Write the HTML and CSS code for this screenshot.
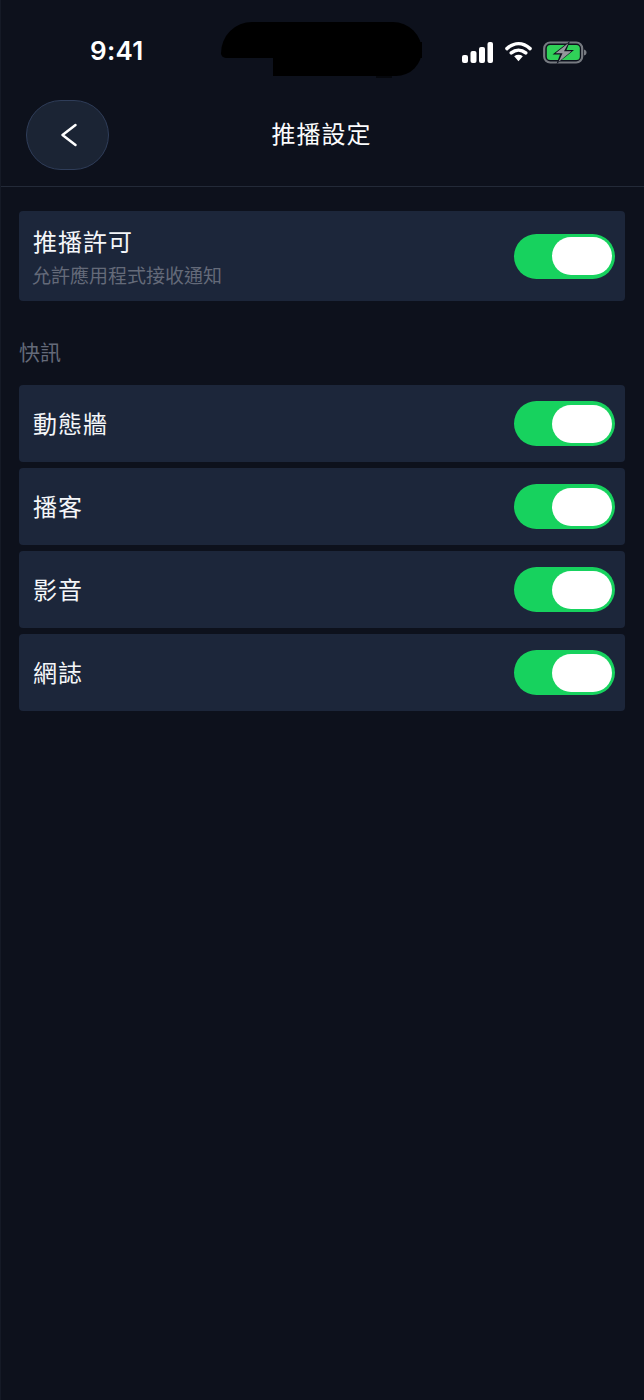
FILE: index.html
```html
<!DOCTYPE html>
<html lang="zh-Hant">
<head>
<meta charset="utf-8">
<title>推播設定</title>
<link rel="stylesheet" href="styles.css">
</head>
<body>
<div class="phone">
  <div class="status">
    <span class="time">9:41</span>
    <div class="status-icons">
      <svg class="signal" width="31" height="21" viewBox="0 0 31 21"><rect x="0" y="13" width="6" height="8" rx="2"/><rect x="8.500" y="9" width="6" height="12" rx="2"/><rect x="17" y="5" width="6" height="16" rx="2"/><rect x="25.500" y="0" width="5.500" height="21" rx="2"/></svg>
      <svg class="wifi" width="27" height="21" viewBox="0 0 28 21"><path d="M2 7.500C9.500 .8 18.500 .8 26 7.500M6.500 12C11 8.300 17 8.300 21.500 12" fill="none" stroke="#fff" stroke-width="3.600" stroke-linecap="round"/><path d="M9.500 15.300C12.300 13.300 15.700 13.300 18.500 15.300L14 20.500Z" fill="#fff"/></svg>
      <svg class="battery" width="44" height="23" viewBox="0 0 44 23"><rect x="1.200" y="1.500" width="38" height="20" rx="6" fill="none" stroke="#767a80" stroke-width="2.200"/><rect x="3.800" y="4" width="33" height="15" rx="3.500" fill="#30d158"/><path d="M41 8.500c1.800.5 2.500 1.500 2.500 3s-.7 2.500-2.500 3z" fill="#767a80"/><path d="M27 0 9.500 13.500H17L13.500 23 31 9H23.500Z" fill="#0d111c"/><path d="M25.500 2 12.500 12.200H19.500L15.500 21 28.500 10.200H21Z" fill="#94979c"/></svg>
    </div>
    <div class="notch"><div class="notch-top"></div><div class="notch-bottom"></div><div class="notch-tick"></div></div>
  </div>

  <header class="nav">
    <button class="back" aria-label="返回">
      <svg width="18" height="24" viewBox="0 0 18 24"><path d="M15.500 2 2.500 12l13 10" fill="none" stroke="#fff" stroke-width="2.500" stroke-linecap="round" stroke-linejoin="round"/></svg>
    </button>
    <h1 class="nav-title">推播設定</h1>
  </header>

  <main class="content">
    <section class="row row-tall">
      <div class="row-text">
        <div class="row-title">推播許可</div>
        <div class="row-sub">允許應用程式接收通知</div>
      </div>
      <div class="toggle"><span class="knob"></span></div>
    </section>

    <div class="section-label">快訊</div>

    <div class="list">
      <section class="row"><div class="row-title row-title-solo">動態牆</div><div class="toggle"><span class="knob"></span></div></section>
      <section class="row"><div class="row-title row-title-solo">播客</div><div class="toggle"><span class="knob"></span></div></section>
      <section class="row"><div class="row-title row-title-solo">影音</div><div class="toggle"><span class="knob"></span></div></section>
      <section class="row"><div class="row-title row-title-solo">網誌</div><div class="toggle"><span class="knob"></span></div></section>
    </div>
  </main>
</div>
</body>
</html>
```

FILE: styles.css
```css
* { box-sizing: border-box; }
html, body { margin: 0; padding: 0; background: #0d111c; }
body { font-family: "Noto Sans CJK TC", "Noto Sans", sans-serif; color: #fff; }
.phone { width: 644px; height: 1400px; overflow: hidden; position: relative; background: #0d111c; border-left: 1px solid #151a26; }

.status { height: 88px; position: relative; display: flex; justify-content: space-between; padding: 31px 57px 0 89px; }
.time { font-family: Inter, "Liberation Sans", sans-serif; font-size: 26px; font-weight: 600; line-height: 42px; height: 42px; margin-top: -1px; letter-spacing: 0.300px; }
.status-icons { display: flex; align-items: flex-start; gap: 11px; padding-top: 10px; }
.signal { fill: #fff; margin-top: 1px; margin-right: 1px; }
.notch { position: absolute; left: 220px; top: 22px; width: 201px; height: 56px; }
.notch-top { position: absolute; left: 0; top: 0; width: 201px; height: 36px; background: #000; border-radius: 32px 30px 0 5px; }
.notch-bottom { position: absolute; left: 52px; top: 20px; width: 149px; height: 34px; background: #000; border-radius: 0 0 26px 0; }
.notch-tick { position: absolute; left: 155px; top: 54px; width: 16px; height: 2px; background: #05070c; }

.nav { height: 99px; position: relative; display: flex; align-items: center; justify-content: center; border-bottom: 1px solid #232a38; padding: 0 2px 8px 0; }
.back { position: absolute; left: 25px; top: 12px; width: 83px; height: 70px; padding: 0; display: flex; align-items: center; justify-content: center; background: #1b2434; border: 1px solid #2f3d59; border-radius: 35px; }
.back svg { margin-left: 3px; }
.nav-title { margin: 0; font-size: 24px; font-weight: 400; line-height: 36px; letter-spacing: 1px; color: #fbfcfd; }

.content { padding: 24px 19px 0 18px; }
.row { height: 77px; display: flex; align-items: center; justify-content: space-between; background: #1c263a; border-radius: 4px; padding: 0 10px 0 14px; }
.row-tall { height: 90px; }
.row-text { display: flex; flex-direction: column; padding-bottom: 2px; }
.row-title { font-size: 24px; font-weight: 400; line-height: 36px; letter-spacing: 1px; color: #f4f6f9; }
.row-title-solo { margin-bottom: 2px; }
.row-sub { font-size: 19px; line-height: 27px; margin: 2px 0 0 -1px; color: #646a79; }
.section-label { font-size: 21px; line-height: 30px; color: #646a79; margin: 35px 0 19px 0; }
.list { display: flex; flex-direction: column; gap: 6px; }
.toggle { width: 101px; height: 45px; border-radius: 23px; background: #17d25e; display: flex; align-items: center; justify-content: flex-end; padding-right: 3px; flex: none; }
.knob { width: 60px; height: 38px; border-radius: 19px; background: #fff; }
```
